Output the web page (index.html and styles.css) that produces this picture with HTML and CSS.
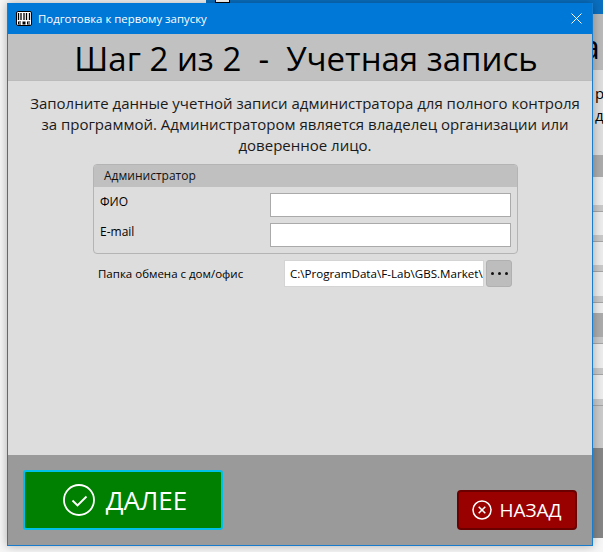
FILE: index.html
```html
<!DOCTYPE html>
<html lang="ru">
<head>
<meta charset="utf-8">
<title>Подготовка к первому запуску</title>
<link rel="stylesheet" href="styles.css">
</head>
<body>
<div class="desktop">
  <div class="bg-topbar"><div class="bg-icon"></div></div>
  <div class="bg-window">
    <div class="bg-head">а</div>
    <div class="bg-text">р<br>д</div>
    <div class="bg-row dark h22"></div>
    <div class="bg-row h28"></div>
    <div class="bg-row sep"></div>
    <div class="bg-row h23"></div>
    <div class="bg-row sep"></div>
    <div class="bg-row h23"></div>
    <div class="bg-row sep"></div>
    <div class="bg-row h24"></div>
    <div class="bg-row sep"></div>
    <div class="bg-row h10"></div>
    <div class="bg-row dark h24"></div>
    <div class="bg-row sep"></div>
    <div class="bg-row h24"></div>
    <div class="bg-row sep"></div>
    <div class="bg-row h24"></div>
    <div class="bg-row sep"></div>
    <div class="bg-row mid"></div>
    <div class="bg-row foot"></div>
  </div>
  <main class="window">
    <header class="titlebar">
      <svg class="app-icon" viewBox="0 0 16 15" width="16" height="15" aria-hidden="true">
        <rect x="0.5" y="0.5" width="15" height="14" rx="1.5" fill="#fff" stroke="#000"/>
        <path d="M2.5 2v7M5 2v7M8 2v7M10.5 2v7M13.5 2v7" stroke="#000" stroke-width="1.3"/>
        <path d="M2 10.5h3v3H2zM6.5 10.5h3v3h-3zM11 10.5h3v3h-3z" fill="#000"/>
        <path d="M3 11.5h2v1H3zM12 11.5h2v1h-2z" fill="#fff"/>
      </svg>
      <span class="title-text">Подготовка к первому запуску</span>
      <svg class="close" viewBox="0 0 11 11" width="11" height="11" aria-hidden="true">
        <path d="M0.5 0.5l10 10M10.5 0.5l-10 10" stroke="#fff" stroke-width="1"/>
      </svg>
    </header>
    <h1 class="step">Шаг 2 из 2&nbsp; -&nbsp; Учетная запись</h1>
    <section class="content">
      <p class="intro">Заполните данные учетной записи администратора для полного контроля за программой. Администратором является владелец организации или доверенное лицо.</p>
      <div class="group">
        <div class="group-head">Администратор</div>
        <div class="group-body">
          <div class="field"><label>ФИО</label><div class="input"></div></div>
          <div class="field"><label>E-mail</label><div class="input"></div></div>
        </div>
      </div>
      <div class="folder">
        <label>Папка обмена с дом/офис</label>
        <div class="path">C:\ProgramData\F-Lab\GBS.Market\</div>
        <div class="browse"><i></i><i></i><i></i></div>
      </div>
    </section>
    <footer class="footer">
      <div class="btn next">
        <svg viewBox="0 0 32 32" width="32" height="32" aria-hidden="true">
          <circle cx="16" cy="16" r="15" fill="none" stroke="#fff" stroke-width="1.8"/>
          <path d="M9.5 16.5l5 5 9-9" fill="none" stroke="#fff" stroke-width="1.9"/>
        </svg>
        <span>ДАЛЕЕ</span>
      </div>
      <div class="btn back">
        <svg viewBox="0 0 20 20" width="20" height="20" aria-hidden="true">
          <circle cx="10" cy="10" r="9" fill="none" stroke="#fff" stroke-width="1.5"/>
          <path d="M6.7 6.7l6.6 6.6M13.3 6.7l-6.6 6.6" fill="none" stroke="#fff" stroke-width="1.5"/>
        </svg>
        <span>НАЗАД</span>
      </div>
    </footer>
  </main>
</div>
</body>
</html>
```

FILE: styles.css
```css
* { box-sizing: border-box; }
html, body { margin: 0; padding: 0; }
body { width: 603px; height: 552px; overflow: hidden; background: #f6f6f6; font-family: "Open Sans", "Noto Sans", sans-serif; color: #000; }
.desktop { position: relative; width: 603px; height: 552px; overflow: hidden; }
.bg-topbar { position: absolute; left: 206px; top: 0; width: 397px; height: 14px; background: #0a6fc0; }
.bg-icon { position: absolute; left: 9px; top: -8px; width: 15px; height: 11px; background: #fff; border: 1px solid #000; }
.bg-window { position: absolute; left: 580px; top: 14px; width: 23px; height: 521px; display: flex; flex-direction: column; }
.bg-head { height: 56px; flex: none; background: #b9b9b9; font-size: 32px; line-height: 44px; padding: 11px 0 0 2px; }
.bg-text { height: 85px; flex: none; background: #dedede; padding: 12px 0 0 15px; font-size: 15px; line-height: 22px; }
.bg-row { flex: none; background: #ececec; }
.h10 { height: 10px; }
.h22 { height: 22px; }
.h23 { height: 23px; }
.h24 { height: 24px; }
.h28 { height: 28px; }
.bg-row.sep { height: 7px; background: #c8c8c8; border-bottom: 1px solid #a4a4a4; }
.bg-row.dark { background: #ababab; }
.bg-row.mid { height: 42px; background: #cacaca; }
.bg-row.foot { height: 90px; background: #858585; }
.window { position: absolute; left: 7px; top: 3px; width: 586px; height: 543px; display: flex; flex-direction: column; border: 1px solid #1a7ccc; border-top: 0; background: #dddddd; box-shadow: 0 0 9px rgba(0,0,0,.3); }
.titlebar { height: 31px; flex: none; display: flex; align-items: center; padding: 0 10px 0 8px; background: #0078d7; color: #fff; }
.app-icon { flex: none; }
.title-text { font-size: 11.4px; margin-left: 6px; flex: 1; }
.close { flex: none; }
.step { margin: 0; height: 47px; flex: none; padding: 3px 0 0 12px; background: #c1c1c1; border-bottom: 1px solid #bbb; font-size: 33px; font-weight: 400; line-height: 43px; text-align: center; white-space: nowrap; }
.content { flex: 1; display: flex; flex-direction: column; align-items: center; min-height: 0; padding-left: 10px; }
.intro { margin: 12px 0 0; width: 560px; font-size: 15px; line-height: 21px; text-align: center; color: #1a1a1a; }
.group { margin-top: 8px; width: 425px; margin-left: 1px; height: 90px; border: 1px solid #b4b4b4; border-radius: 4px; overflow: hidden; }
.group-head { height: 22px; background: #c0c0c0; padding-left: 10px; font-size: 12px; line-height: 22px; color: #111; }
.group-body { padding: 6px 6px 0 6px; display: flex; flex-direction: column; gap: 6px; }
.field { display: flex; justify-content: space-between; height: 24px; }
.field label { font-size: 12px; line-height: 18px; }
.input { width: 241px; height: 24px; background: #fff; border: 1px solid #aaa; }
.folder { margin-top: 6px; width: 425px; margin-left: 1px; height: 27px; display: flex; align-items: center; padding-left: 5px; }
.folder label { width: 186px; font-size: 11.5px; flex: none; }
.path { width: 200px; height: 27px; background: #fff; border: 1px solid #d4d4d4; padding-left: 5px; font-size: 11.6px; line-height: 25px; white-space: nowrap; flex: none; }
.browse { width: 26px; height: 27px; margin-left: 2px; flex: none; background: #bdbdbd; border: 1px solid #b0b0b0; border-radius: 3px; display: flex; align-items: center; justify-content: center; gap: 4px; }
.browse i { width: 3px; height: 3px; border-radius: 50%; background: #111; }
.footer { height: 90px; flex: none; background: #9a9a9a; display: flex; justify-content: space-between; align-items: flex-end; padding: 0 15px 15px 15px; }
.btn { display: flex; align-items: center; justify-content: center; color: #fff; }
.next { width: 200px; height: 60px; padding-left: 4px; background: #008000; border: 2px solid #00c0e8; border-radius: 3px; gap: 11px; font-size: 26px; }
.back { width: 120px; height: 40px; background: #990000; border: 2px solid #6a0000; border-radius: 4px; gap: 7px; font-size: 19px; }
```
